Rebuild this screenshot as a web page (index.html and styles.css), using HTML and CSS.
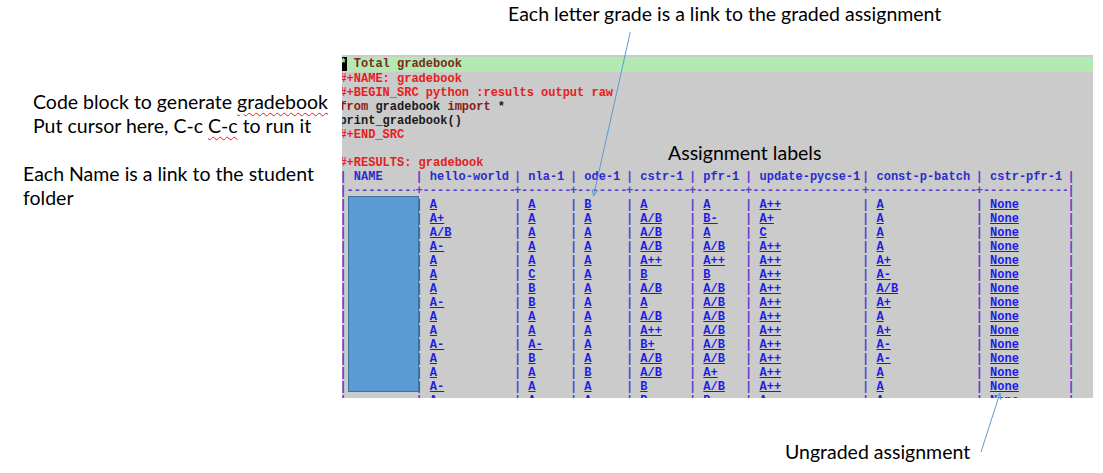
FILE: index.html
```html
<!DOCTYPE html>
<html>
<head>
<meta charset="utf-8">
<link rel="stylesheet" href="styles.css">
</head>
<body>
<div class="slide">
  <div class="side">
    <div class="note note-code">Code block to generate <span class="spell">gradebook</span><br>Put cursor here, C-c <span class="spell">C-c</span> to run it</div>
    <div class="note note-name">Each Name is a link to the student<br>folder</div>
  </div>
  <div class="main">
    <div class="note note-top">Each letter grade is a link to the graded assignment</div>
    <div class="panel">
      <div class="src">
        <div class="headline"><span class="cursor">*</span><span class="hl-text"> Total gradebook</span></div>
        <div class="line meta">#+NAME: gradebook</div>
        <div class="line meta">#+BEGIN_SRC python :results output raw</div>
        <div class="line plain"><span class="kw">from</span> gradebook <span class="kw">import</span> *</div>
        <div class="line plain">print_gradebook()</div>
        <div class="line meta">#+END_SRC</div>
        <div class="line"> </div>
        <div class="line meta">#+RESULTS: gradebook</div>

        <div class="row">
          <span class="cell w0"><span class="bar">|</span> <span class="th">NAME</span></span>
          <span class="cell w1"><span class="bar">|</span> <span class="th">hello-world</span></span>
          <span class="cell w2"><span class="bar">|</span> <span class="th">nla-1</span></span>
          <span class="cell w3"><span class="bar">|</span> <span class="th">ode-1</span></span>
          <span class="cell w4"><span class="bar">|</span> <span class="th">cstr-1</span></span>
          <span class="cell w5"><span class="bar">|</span> <span class="th">pfr-1</span></span>
          <span class="cell w6"><span class="bar">|</span> <span class="th">update-pycse-1</span></span>
          <span class="cell w7"><span class="bar">|</span> <span class="th">const-p-batch</span></span>
          <span class="cell w8"><span class="bar">|</span> <span class="th">cstr-pfr-1</span></span>
          <span class="cell"><span class="bar">|</span></span>
        </div>
        <div class="row sep">
          <span class="cell w0">|------------------------</span>
          <span class="cell w1">+------------------------</span>
          <span class="cell w2">+------------------------</span>
          <span class="cell w3">+------------------------</span>
          <span class="cell w4">+------------------------</span>
          <span class="cell w5">+------------------------</span>
          <span class="cell w6">+------------------------</span>
          <span class="cell w7">+------------------------</span>
          <span class="cell w8">+------------------------</span>
          <span class="cell">|</span>
        </div>

        <div class="row"><span class="cell w0"><span class="bar">|</span> </span><span class="cell w1"><span class="bar">|</span> <a class="g">A</a></span><span class="cell w2"><span class="bar">|</span> <a class="g">A</a></span><span class="cell w3"><span class="bar">|</span> <a class="g">B</a></span><span class="cell w4"><span class="bar">|</span> <a class="g">A</a></span><span class="cell w5"><span class="bar">|</span> <a class="g">A</a></span><span class="cell w6"><span class="bar">|</span> <a class="g">A++</a></span><span class="cell w7"><span class="bar">|</span> <a class="g">A</a></span><span class="cell w8"><span class="bar">|</span> <a class="g">None</a></span><span class="cell"><span class="bar">|</span></span></div>
        <div class="row"><span class="cell w0"><span class="bar">|</span> </span><span class="cell w1"><span class="bar">|</span> <a class="g">A+</a></span><span class="cell w2"><span class="bar">|</span> <a class="g">A</a></span><span class="cell w3"><span class="bar">|</span> <a class="g">A</a></span><span class="cell w4"><span class="bar">|</span> <a class="g">A/B</a></span><span class="cell w5"><span class="bar">|</span> <a class="g">B-</a></span><span class="cell w6"><span class="bar">|</span> <a class="g">A+</a></span><span class="cell w7"><span class="bar">|</span> <a class="g">A</a></span><span class="cell w8"><span class="bar">|</span> <a class="g">None</a></span><span class="cell"><span class="bar">|</span></span></div>
        <div class="row"><span class="cell w0"><span class="bar">|</span> </span><span class="cell w1"><span class="bar">|</span> <a class="g">A/B</a></span><span class="cell w2"><span class="bar">|</span> <a class="g">A</a></span><span class="cell w3"><span class="bar">|</span> <a class="g">A</a></span><span class="cell w4"><span class="bar">|</span> <a class="g">A/B</a></span><span class="cell w5"><span class="bar">|</span> <a class="g">A</a></span><span class="cell w6"><span class="bar">|</span> <a class="g">C</a></span><span class="cell w7"><span class="bar">|</span> <a class="g">A</a></span><span class="cell w8"><span class="bar">|</span> <a class="g">None</a></span><span class="cell"><span class="bar">|</span></span></div>
        <div class="row"><span class="cell w0"><span class="bar">|</span> </span><span class="cell w1"><span class="bar">|</span> <a class="g">A-</a></span><span class="cell w2"><span class="bar">|</span> <a class="g">A</a></span><span class="cell w3"><span class="bar">|</span> <a class="g">A</a></span><span class="cell w4"><span class="bar">|</span> <a class="g">A/B</a></span><span class="cell w5"><span class="bar">|</span> <a class="g">A/B</a></span><span class="cell w6"><span class="bar">|</span> <a class="g">A++</a></span><span class="cell w7"><span class="bar">|</span> <a class="g">A</a></span><span class="cell w8"><span class="bar">|</span> <a class="g">None</a></span><span class="cell"><span class="bar">|</span></span></div>
        <div class="row"><span class="cell w0"><span class="bar">|</span> </span><span class="cell w1"><span class="bar">|</span> <a class="g">A</a></span><span class="cell w2"><span class="bar">|</span> <a class="g">A</a></span><span class="cell w3"><span class="bar">|</span> <a class="g">A</a></span><span class="cell w4"><span class="bar">|</span> <a class="g">A++</a></span><span class="cell w5"><span class="bar">|</span> <a class="g">A++</a></span><span class="cell w6"><span class="bar">|</span> <a class="g">A++</a></span><span class="cell w7"><span class="bar">|</span> <a class="g">A+</a></span><span class="cell w8"><span class="bar">|</span> <a class="g">None</a></span><span class="cell"><span class="bar">|</span></span></div>
        <div class="row"><span class="cell w0"><span class="bar">|</span> </span><span class="cell w1"><span class="bar">|</span> <a class="g">A</a></span><span class="cell w2"><span class="bar">|</span> <a class="g">C</a></span><span class="cell w3"><span class="bar">|</span> <a class="g">A</a></span><span class="cell w4"><span class="bar">|</span> <a class="g">B</a></span><span class="cell w5"><span class="bar">|</span> <a class="g">B</a></span><span class="cell w6"><span class="bar">|</span> <a class="g">A++</a></span><span class="cell w7"><span class="bar">|</span> <a class="g">A-</a></span><span class="cell w8"><span class="bar">|</span> <a class="g">None</a></span><span class="cell"><span class="bar">|</span></span></div>
        <div class="row"><span class="cell w0"><span class="bar">|</span> </span><span class="cell w1"><span class="bar">|</span> <a class="g">A</a></span><span class="cell w2"><span class="bar">|</span> <a class="g">B</a></span><span class="cell w3"><span class="bar">|</span> <a class="g">A</a></span><span class="cell w4"><span class="bar">|</span> <a class="g">A/B</a></span><span class="cell w5"><span class="bar">|</span> <a class="g">A/B</a></span><span class="cell w6"><span class="bar">|</span> <a class="g">A++</a></span><span class="cell w7"><span class="bar">|</span> <a class="g">A/B</a></span><span class="cell w8"><span class="bar">|</span> <a class="g">None</a></span><span class="cell"><span class="bar">|</span></span></div>
        <div class="row"><span class="cell w0"><span class="bar">|</span> </span><span class="cell w1"><span class="bar">|</span> <a class="g">A-</a></span><span class="cell w2"><span class="bar">|</span> <a class="g">B</a></span><span class="cell w3"><span class="bar">|</span> <a class="g">A</a></span><span class="cell w4"><span class="bar">|</span> <a class="g">A</a></span><span class="cell w5"><span class="bar">|</span> <a class="g">A/B</a></span><span class="cell w6"><span class="bar">|</span> <a class="g">A++</a></span><span class="cell w7"><span class="bar">|</span> <a class="g">A+</a></span><span class="cell w8"><span class="bar">|</span> <a class="g">None</a></span><span class="cell"><span class="bar">|</span></span></div>
        <div class="row"><span class="cell w0"><span class="bar">|</span> </span><span class="cell w1"><span class="bar">|</span> <a class="g">A</a></span><span class="cell w2"><span class="bar">|</span> <a class="g">A</a></span><span class="cell w3"><span class="bar">|</span> <a class="g">A</a></span><span class="cell w4"><span class="bar">|</span> <a class="g">A/B</a></span><span class="cell w5"><span class="bar">|</span> <a class="g">A/B</a></span><span class="cell w6"><span class="bar">|</span> <a class="g">A++</a></span><span class="cell w7"><span class="bar">|</span> <a class="g">A</a></span><span class="cell w8"><span class="bar">|</span> <a class="g">None</a></span><span class="cell"><span class="bar">|</span></span></div>
        <div class="row"><span class="cell w0"><span class="bar">|</span> </span><span class="cell w1"><span class="bar">|</span> <a class="g">A</a></span><span class="cell w2"><span class="bar">|</span> <a class="g">A</a></span><span class="cell w3"><span class="bar">|</span> <a class="g">A</a></span><span class="cell w4"><span class="bar">|</span> <a class="g">A++</a></span><span class="cell w5"><span class="bar">|</span> <a class="g">A/B</a></span><span class="cell w6"><span class="bar">|</span> <a class="g">A++</a></span><span class="cell w7"><span class="bar">|</span> <a class="g">A+</a></span><span class="cell w8"><span class="bar">|</span> <a class="g">None</a></span><span class="cell"><span class="bar">|</span></span></div>
        <div class="row"><span class="cell w0"><span class="bar">|</span> </span><span class="cell w1"><span class="bar">|</span> <a class="g">A-</a></span><span class="cell w2"><span class="bar">|</span> <a class="g">A-</a></span><span class="cell w3"><span class="bar">|</span> <a class="g">A</a></span><span class="cell w4"><span class="bar">|</span> <a class="g">B+</a></span><span class="cell w5"><span class="bar">|</span> <a class="g">A/B</a></span><span class="cell w6"><span class="bar">|</span> <a class="g">A++</a></span><span class="cell w7"><span class="bar">|</span> <a class="g">A-</a></span><span class="cell w8"><span class="bar">|</span> <a class="g">None</a></span><span class="cell"><span class="bar">|</span></span></div>
        <div class="row"><span class="cell w0"><span class="bar">|</span> </span><span class="cell w1"><span class="bar">|</span> <a class="g">A</a></span><span class="cell w2"><span class="bar">|</span> <a class="g">B</a></span><span class="cell w3"><span class="bar">|</span> <a class="g">A</a></span><span class="cell w4"><span class="bar">|</span> <a class="g">A/B</a></span><span class="cell w5"><span class="bar">|</span> <a class="g">A/B</a></span><span class="cell w6"><span class="bar">|</span> <a class="g">A++</a></span><span class="cell w7"><span class="bar">|</span> <a class="g">A-</a></span><span class="cell w8"><span class="bar">|</span> <a class="g">None</a></span><span class="cell"><span class="bar">|</span></span></div>
        <div class="row"><span class="cell w0"><span class="bar">|</span> </span><span class="cell w1"><span class="bar">|</span> <a class="g">A</a></span><span class="cell w2"><span class="bar">|</span> <a class="g">A</a></span><span class="cell w3"><span class="bar">|</span> <a class="g">B</a></span><span class="cell w4"><span class="bar">|</span> <a class="g">A/B</a></span><span class="cell w5"><span class="bar">|</span> <a class="g">A+</a></span><span class="cell w6"><span class="bar">|</span> <a class="g">A++</a></span><span class="cell w7"><span class="bar">|</span> <a class="g">A</a></span><span class="cell w8"><span class="bar">|</span> <a class="g">None</a></span><span class="cell"><span class="bar">|</span></span></div>
        <div class="row"><span class="cell w0"><span class="bar">|</span> </span><span class="cell w1"><span class="bar">|</span> <a class="g">A-</a></span><span class="cell w2"><span class="bar">|</span> <a class="g">A</a></span><span class="cell w3"><span class="bar">|</span> <a class="g">A</a></span><span class="cell w4"><span class="bar">|</span> <a class="g">B</a></span><span class="cell w5"><span class="bar">|</span> <a class="g">A/B</a></span><span class="cell w6"><span class="bar">|</span> <a class="g">A++</a></span><span class="cell w7"><span class="bar">|</span> <a class="g">A</a></span><span class="cell w8"><span class="bar">|</span> <a class="g">None</a></span><span class="cell"><span class="bar">|</span></span></div>
        <div class="row"><span class="cell w0"><span class="bar">|</span> </span><span class="cell w1"><span class="bar">|</span> <a class="g">A</a></span><span class="cell w2"><span class="bar">|</span> <a class="g">A</a></span><span class="cell w3"><span class="bar">|</span> <a class="g">A</a></span><span class="cell w4"><span class="bar">|</span> <a class="g">B</a></span><span class="cell w5"><span class="bar">|</span> <a class="g">B</a></span><span class="cell w6"><span class="bar">|</span> <a class="g">A</a></span><span class="cell w7"><span class="bar">|</span> <a class="g">A</a></span><span class="cell w8"><span class="bar">|</span> <a class="g">None</a></span><span class="cell"><span class="bar">|</span></span></div>
      </div>
      <div class="namebox"></div>
      <div class="note label-assign">Assignment labels</div>
    </div>
    <div class="note note-bottom">Ungraded assignment</div>
  </div>
  <svg class="arrows" width="1103" height="473" viewBox="0 0 1103 473">
    <g fill="none" stroke="#5b9bd5" stroke-width="1">
      <line x1="630.3" y1="32" x2="593.5" y2="196"/>
      <polyline points="597.8,190.5 593.5,196 592,189.2"/>
      <line x1="981" y1="452" x2="1000" y2="393"/>
      <polyline points="995.2,398.1 1000,393 1000.9,399.9"/>
    </g>
  </svg>
</div>
</body>
</html>
```

FILE: styles.css
```css
* { box-sizing: border-box; }

body {
  margin: 0;
  background: #ffffff;
}

.slide {
  position: relative;
  width: 1103px;
  height: 473px;
  display: flex;
  overflow: hidden;
  font-family: Lato, "Open Sans", sans-serif;
  color: #000;
}

.note {
  font-family: Lato, "Open Sans", sans-serif;
  font-weight: normal;
  font-size: 19.5px;
  line-height: 24px;
  white-space: nowrap;
  color: #000;
}

.spell {
  text-decoration: underline wavy #e02020;
  text-decoration-thickness: 1px;
  text-underline-offset: 3px;
}

.side {
  width: 342px;
  flex: none;
  padding-top: 90px;
  display: flex;
  flex-direction: column;
  align-items: flex-start;
}

.note-code { margin-left: 33px; }
.note-name { margin-left: 23px; margin-top: 24px; }

.main {
  width: 761px;
  flex: none;
  display: flex;
  flex-direction: column;
}

.note-top {
  height: 55px;
  padding: 2px 0 0 166px;
}

.note-bottom {
  padding: 42px 0 0 443px;
}

.panel {
  position: relative;
  width: 751px;
  height: 343px;
  flex: none;
  background: #cbcbcb;
  overflow: hidden;
  padding-top: 2px;
  font: bold 12px/14px "Liberation Mono", "Courier New", monospace;
}

.src { margin-left: -2.6px; }

.headline {
  height: 15px;
  line-height: 15px;
  background: #b2eab2;
  white-space: pre;
}

.cursor { background: #000; color: #b2eab2; }
.hl-text { color: #7a2a20; }

.line { height: 14px; white-space: pre; }
.meta { color: #e4201c; }
.plain { color: #1a1a1a; }
.kw { color: #8b1a12; }

.row {
  display: flex;
  height: 14px;
}

.cell {
  flex: none;
  overflow: hidden;
  white-space: pre;
}

.w0 { width: 76px; }
.w1 { width: 98.5px; }
.w2 { width: 56px; }
.w3 { width: 56px; }
.w4 { width: 63px; }
.w5 { width: 56.2px; }
.w6 { width: 117px; }
.w7 { width: 113.6px; }
.w8 { width: 91.7px; }

.bar { color: #5a3ecf; }
.sep { color: #5a3ecf; }
.th { color: #2c2cd0; }

.g {
  color: #1c1ce6;
  text-decoration: underline;
  text-underline-offset: 1px;
}

.namebox {
  position: absolute;
  left: 6px;
  top: 141px;
  width: 71px;
  height: 196px;
  background: #5b9bd5;
  border: 1px solid #41719c;
}

.label-assign {
  position: absolute;
  left: 326px;
  top: 86px;
}

.arrows {
  position: absolute;
  left: 0;
  top: 0;
  pointer-events: none;
}
```
